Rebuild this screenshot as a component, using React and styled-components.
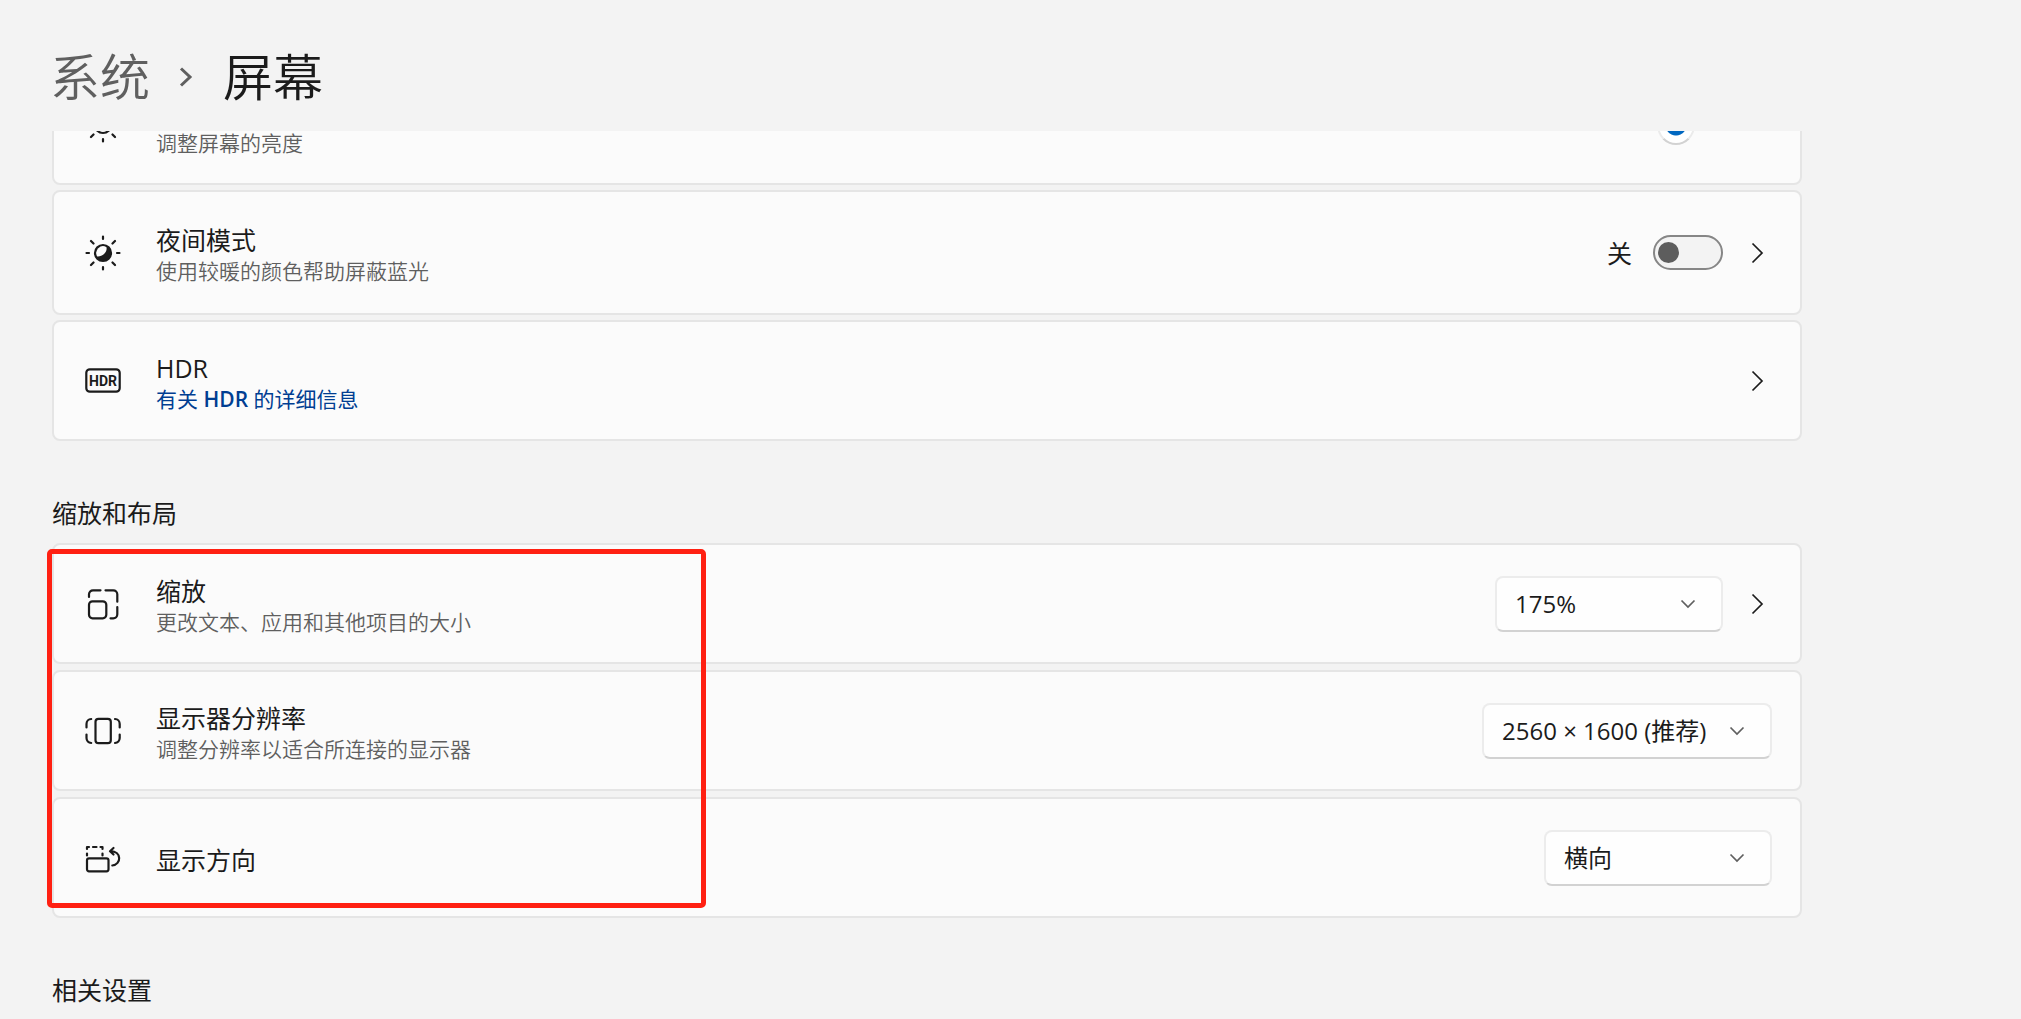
import React from 'react';
import styled, { createGlobalStyle } from 'styled-components';

const ink = '#1b1b1b';
const muted = '#5f5f5f';
const line = '#e5e5e5';

const GlobalStyle = createGlobalStyle`
  *, *::before, *::after { box-sizing: border-box; }
  body {
    margin: 0;
    background: #f3f3f3;
    color: ${ink};
    font-family: "Open Sans", "Noto Sans CJK SC", sans-serif;
    font-size: 25px;
  }
`;

const Page = styled.div`
  height: 100vh;
  display: flex;
  flex-direction: column;
  overflow: hidden;
`;

const Header = styled.header`
  flex: none;
  padding: 40px 50px 17px;
`;

const Crumbs = styled.nav`
  display: flex;
  align-items: center;
  font-size: 50px;
  line-height: 74px;
`;

const CrumbLink = styled.a`
  color: ${muted};
  text-decoration: none;
  font-weight: 350;
`;

const CrumbArrow = styled.svg`
  width: 14px;
  height: 20px;
  margin: 0 30px 0 29px;
  fill: none;
  stroke: ${muted};
  stroke-width: 3;
`;

const PageTitle = styled.h1`
  margin: 0;
  font-size: inherit;
  font-weight: 350;
`;

const Viewport = styled.main`
  flex: 1;
  min-height: 0;
  overflow: hidden;
  padding: 0 52px;
`;

const Content = styled.div`
  max-width: 1750px;
  margin-top: ${(p) => -p.$scrolled}px;
`;

const Group = styled.section`
  position: relative;
  display: flex;
  flex-direction: column;
  gap: ${(p) => p.$gap || 5}px;
`;

const SectionTitle = styled.h2`
  margin: 55px 0 13px;
  font-size: 25px;
  line-height: 34px;
  font-weight: 400;
`;

const Card = styled.div`
  display: flex;
  align-items: center;
  min-height: ${(p) => (p.$tall ? 125 : 121)}px;
  padding: 0 28px 0 31px;
  background: #fbfbfb;
  border: 2px solid ${line};
  border-radius: 8px;
`;

const Icon = styled.svg`
  flex: none;
  width: 36px;
  height: 36px;
  margin-right: 35px;
  fill: none;
  stroke: ${ink};
  stroke-width: 2.200;
  stroke-linecap: round;
  stroke-linejoin: round;
`;

const IconText = styled.text`
  font: 700 14px "Liberation Sans Narrow", "Roboto", sans-serif;
  fill: ${ink};
  stroke: none;
  text-anchor: middle;
`;

const Texts = styled.div`
  flex: 1;
  min-width: 0;
  padding-top: 5px;
`;

const Title = styled.label`
  display: block;
  font-size: 25px;
  line-height: 31px;
`;

const Note = styled.div`
  font-size: 21px;
  line-height: 30px;
  font-weight: 350;
  color: ${muted};
`;

const MoreLink = styled.a`
  display: block;
  width: max-content;
  font-size: 21px;
  line-height: 30px;
  color: #003e92;
  text-decoration: none;
`;

const Strong = styled.span`
  font-weight: 600;
`;

const Controls = styled.div`
  display: flex;
  align-items: center;
`;

const ToggleState = styled.span`
  margin-right: 21px;
  line-height: 32px;
`;

const Toggle = styled.input`
  appearance: none;
  display: flex;
  align-items: center;
  width: 70px;
  height: 35px;
  margin: 0;
  padding: 0 3px;
  border: 2px solid #868686;
  border-radius: 18px;
  background: #f3f3f3;
  &::before {
    content: '';
    width: 21px;
    height: 21px;
    border-radius: 50%;
    background: #5d5d5d;
  }
  &:checked {
    justify-content: flex-end;
    background: #0067c0;
    border-color: #0067c0;
  }
  &:checked::before { background: #fff; }
`;

const Slider = styled.input`
  appearance: none;
  width: 286px;
  height: 40px;
  margin: 0;
  background: linear-gradient(#868686, #868686) center / 100% 7px no-repeat;
  &::-webkit-slider-thumb {
    appearance: none;
    width: 38px;
    height: 40px;
    border: 2px solid #ebebeb;
    border-bottom-color: #d2d2d2;
    border-radius: 50%;
    background: radial-gradient(circle, #0067c0 10px, #fff 11px);
  }
`;

const MoreButton = styled.button`
  display: flex;
  margin-left: 28px;
  padding: 0;
  width: 21px;
  height: 36px;
  align-items: center;
  border: 0;
  background: none;
`;

const MoreArrow = styled.svg`
  width: 14px;
  height: 22px;
  fill: none;
  stroke: ${ink};
  stroke-width: 1.700;
`;

const SelectBox = styled.div`
  display: grid;
  align-items: center;
  width: ${(p) => (p.$wide ? 290 : 228)}px;
  & > * { grid-area: 1 / 1; }
`;

const Select = styled.select`
  appearance: none;
  width: 100%;
  height: 56px;
  padding: 0 56px 0 18px;
  border: 2px solid #ececec;
  border-bottom-color: #d2d2d2;
  border-radius: 8px;
  background: #fefefe;
  color: ${ink};
  font: inherit;
  font-size: 24px;
`;

const SelectArrow = styled.svg`
  justify-self: end;
  width: 16px;
  height: 10px;
  margin-right: 27px;
  fill: none;
  stroke: ${muted};
  stroke-width: 1.700;
  pointer-events: none;
`;

const Highlight = styled.div`
  position: absolute;
  top: 6px;
  bottom: 10px;
  left: -5px;
  width: 659px;
  border: 5px solid #ff2012;
  border-radius: 5px;
  pointer-events: none;
`;

const Rays = () => (
  <path d="M18 1.500V4M18 32v2.500M1.500 18H4M32 18h2.500M6 6l2.500 2.500M27.500 27.500l2.500 2.500M6 30l2.500-2.500M27.500 8.500L30 6" />
);

const BrightnessIcon = () => (
  <Icon viewBox="0 0 36 36" aria-hidden="true">
    <Rays />
    <circle cx="18" cy="18" r="8" />
  </Icon>
);

const NightIcon = () => (
  <Icon viewBox="0 0 36 36" aria-hidden="true">
    <Rays />
    <circle cx="18" cy="18" r="8" fill={ink} />
    <path
      d="M21.500 12.200A6.800 6.800 0 0 0 12.200 21.500C17 22 22.500 17.500 21.500 12.200Z"
      fill="#fbfbfb"
      stroke="none"
    />
  </Icon>
);

const HdrIcon = () => (
  <Icon viewBox="0 0 36 36" aria-hidden="true">
    <rect x="1.300" y="6.300" width="33.400" height="22.400" rx="3.500" />
    <IconText x="18" y="22.500">HDR</IconText>
  </Icon>
);

const ScaleIcon = () => (
  <Icon viewBox="0 0 36 36" aria-hidden="true">
    <rect x="4" y="15.300" width="17.300" height="17" rx="3.500" />
    <path d="M4 11V8.300a4 4 0 0 1 4-4h7.500M20.500 4.300h7.800a4 4 0 0 1 4 4v7.400M32.300 21v7.300a4 4 0 0 1-4 4H25.500" />
  </Icon>
);

const ResolutionIcon = () => (
  <Icon viewBox="0 0 36 36" aria-hidden="true">
    <rect x="10.500" y="5.800" width="15.300" height="24.400" rx="3" />
    <path d="M1.500 14.500V11a5 5 0 0 1 4.700-5M1.500 21.500V25a5 5 0 0 0 4.700 5M34.700 14.500V11a5 5 0 0 0-4.700-5M34.700 21.500V25a5 5 0 0 1-4.700 5" />
  </Icon>
);

const OrientationIcon = () => (
  <Icon viewBox="0 0 36 36" aria-hidden="true">
    <rect x="2" y="18.300" width="21.500" height="13" rx="2" />
    <path d="M2 15.500V13.500M2 9V7H4M8 7H11.500M15.500 7H17.500V9M17.500 13.500V15.500" />
    <path d="M27.300 25.500C36.500 24.500 37 11.500 25.500 11.200M28.500 8L25 11.200L28.500 14.500" />
  </Icon>
);

const More = ({ label }) => (
  <MoreButton type="button" aria-label={label}>
    <MoreArrow viewBox="0 0 14 22" aria-hidden="true">
      <path d="M1.500 1.500L11 11L1.500 20.500" />
    </MoreArrow>
  </MoreButton>
);

const Dropdown = ({ id, value, wide }) => (
  <SelectBox $wide={wide}>
    <Select id={id} defaultValue={value}>
      <option>{value}</option>
    </Select>
    <SelectArrow viewBox="0 0 16 10" aria-hidden="true">
      <path d="M1.500 1.500L8 8L14.500 1.500" />
    </SelectArrow>
  </SelectBox>
);

export default function App() {
  return (
    <>
      <GlobalStyle />
      <Page>
        <Header>
          <Crumbs>
            <CrumbLink href="#system">系统</CrumbLink>
            <CrumbArrow viewBox="0 0 14 20" aria-hidden="true">
              <path d="M2 1.500L11 10L2 18.500" />
            </CrumbArrow>
            <PageTitle>屏幕</PageTitle>
          </Crumbs>
        </Header>
        <Viewport>
          <Content $scrolled={67}>
            <Group>
              <Card>
                <BrightnessIcon />
                <Texts>
                  <Title htmlFor="brightness">亮度</Title>
                  <Note>调整屏幕的亮度</Note>
                </Texts>
                <Controls>
                  <Slider id="brightness" type="range" min="0" max="100" defaultValue="69" />
                </Controls>
              </Card>
              <Card $tall>
                <NightIcon />
                <Texts>
                  <Title htmlFor="night">夜间模式</Title>
                  <Note>使用较暖的颜色帮助屏蔽蓝光</Note>
                </Texts>
                <Controls>
                  <ToggleState>关</ToggleState>
                  <Toggle id="night" type="checkbox" role="switch" />
                  <More label="夜间模式" />
                </Controls>
              </Card>
              <Card>
                <HdrIcon />
                <Texts>
                  <Title as="div">HDR</Title>
                  <MoreLink href="#hdr">
                    有关 <Strong>HDR</Strong> 的详细信息
                  </MoreLink>
                </Texts>
                <Controls>
                  <More label="HDR" />
                </Controls>
              </Card>
            </Group>

            <SectionTitle>缩放和布局</SectionTitle>
            <Group $gap={6}>
              <Card>
                <ScaleIcon />
                <Texts>
                  <Title htmlFor="scale">缩放</Title>
                  <Note>更改文本、应用和其他项目的大小</Note>
                </Texts>
                <Controls>
                  <Dropdown id="scale" value="175%" />
                  <More label="缩放" />
                </Controls>
              </Card>
              <Card>
                <ResolutionIcon />
                <Texts>
                  <Title htmlFor="resolution">显示器分辨率</Title>
                  <Note>调整分辨率以适合所连接的显示器</Note>
                </Texts>
                <Controls>
                  <Dropdown id="resolution" value="2560 × 1600 (推荐)" wide />
                </Controls>
              </Card>
              <Card>
                <OrientationIcon />
                <Texts>
                  <Title htmlFor="orientation">显示方向</Title>
                </Texts>
                <Controls>
                  <Dropdown id="orientation" value="横向" />
                </Controls>
              </Card>
              <Highlight />
            </Group>

            <SectionTitle>相关设置</SectionTitle>
          </Content>
        </Viewport>
      </Page>
    </>
  );
}
